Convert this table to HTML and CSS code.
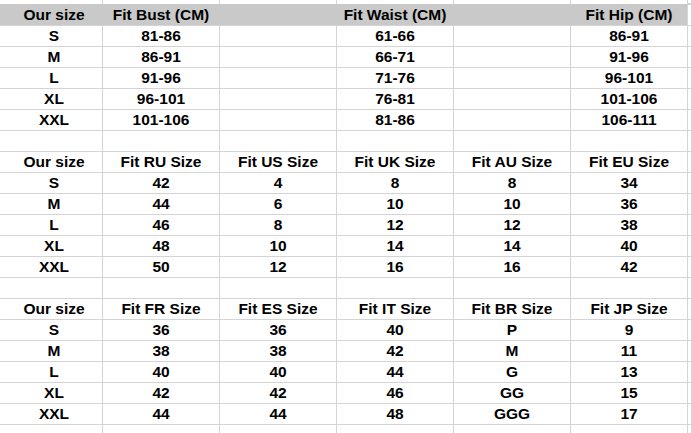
FILE: index.html
```html
<!DOCTYPE html>
<html>
<head>
<meta charset="utf-8">
<link rel="stylesheet" href="styles.css">
</head>
<body>
<div class="sheet">
  <div class="row stub"><div></div><div></div><div></div><div></div><div></div><div></div><div></div></div>
  <div class="row head">
    <div>Our size</div><div>Fit Bust (CM)</div><div></div><div>Fit Waist (CM)</div><div></div><div>Fit Hip (CM)</div><div class="tail"></div>
  </div>
  <div class="row"><div>S</div><div>81-86</div><div></div><div>61-66</div><div></div><div>86-91</div><div></div></div>
  <div class="row"><div>M</div><div>86-91</div><div></div><div>66-71</div><div></div><div>91-96</div><div></div></div>
  <div class="row"><div>L</div><div>91-96</div><div></div><div>71-76</div><div></div><div>96-101</div><div></div></div>
  <div class="row"><div>XL</div><div>96-101</div><div></div><div>76-81</div><div></div><div>101-106</div><div></div></div>
  <div class="row"><div>XXL</div><div>101-106</div><div></div><div>81-86</div><div></div><div>106-111</div><div></div></div>
  <div class="row"><div></div><div></div><div></div><div></div><div></div><div></div><div></div></div>

  <div class="row"><div>Our size</div><div>Fit RU Size</div><div>Fit US Size</div><div>Fit UK Size</div><div>Fit AU Size</div><div>Fit EU Size</div><div></div></div>
  <div class="row"><div>S</div><div>42</div><div>4</div><div>8</div><div>8</div><div>34</div><div></div></div>
  <div class="row"><div>M</div><div>44</div><div>6</div><div>10</div><div>10</div><div>36</div><div></div></div>
  <div class="row"><div>L</div><div>46</div><div>8</div><div>12</div><div>12</div><div>38</div><div></div></div>
  <div class="row"><div>XL</div><div>48</div><div>10</div><div>14</div><div>14</div><div>40</div><div></div></div>
  <div class="row"><div>XXL</div><div>50</div><div>12</div><div>16</div><div>16</div><div>42</div><div></div></div>
  <div class="row"><div></div><div></div><div></div><div></div><div></div><div></div><div></div></div>

  <div class="row"><div>Our size</div><div>Fit FR Size</div><div>Fit ES Size</div><div>Fit IT Size</div><div>Fit BR Size</div><div>Fit JP Size</div><div></div></div>
  <div class="row"><div>S</div><div>36</div><div>36</div><div>40</div><div>P</div><div>9</div><div></div></div>
  <div class="row"><div>M</div><div>38</div><div>38</div><div>42</div><div>M</div><div>11</div><div></div></div>
  <div class="row"><div>L</div><div>40</div><div>40</div><div>44</div><div>G</div><div>13</div><div></div></div>
  <div class="row"><div>XL</div><div>42</div><div>42</div><div>46</div><div>GG</div><div>15</div><div></div></div>
  <div class="row"><div>XXL</div><div>44</div><div>44</div><div>48</div><div>GGG</div><div>17</div><div></div></div>
  <div class="row last"><div></div><div></div><div></div><div></div><div></div><div></div><div></div></div>
</div>
</body>
</html>
```

FILE: styles.css
```css
html, body {
  margin: 0;
  padding: 0;
  background: #ffffff;
}
body {
  width: 692px;
  height: 433px;
  overflow: hidden;
  font-family: "Liberation Sans", Arial, sans-serif;
  font-weight: bold;
  font-size: 15.5px;
  color: #000000;
}
.sheet {
  display: flex;
  flex-direction: column;
}
.row {
  display: grid;
  grid-template-columns: 103px repeat(5, 117px) 1fr;
  height: 21px;
}
.row > div {
  box-sizing: border-box;
  border-right: 1px solid #d4d4d4;
  border-bottom: 1px solid #d4d4d4;
  line-height: 20px;
  text-align: center;
  white-space: nowrap;
  overflow: hidden;
}
.row > div:first-child {
  padding-left: 6px;
}
.stub {
  height: 4px;
}
.stub > div {
  border-bottom: none;
}
.stub > div:last-child {
  border-bottom: 1px solid #d4d4d4;
}
.head {
  height: 22px;
}
.head > div {
  background: #c9c9c9;
  border-top: 1px solid #c9c9c9;
  border-right-color: #c9c9c9;
}
.head > div:nth-child(6) {
  border-right-color: #d4d4d4;
}
.head > .tail {
  background: #ffffff;
  border-top-color: #d4d4d4;
  border-right-color: #d4d4d4;
}
.last {
  height: 9px;
}
```
